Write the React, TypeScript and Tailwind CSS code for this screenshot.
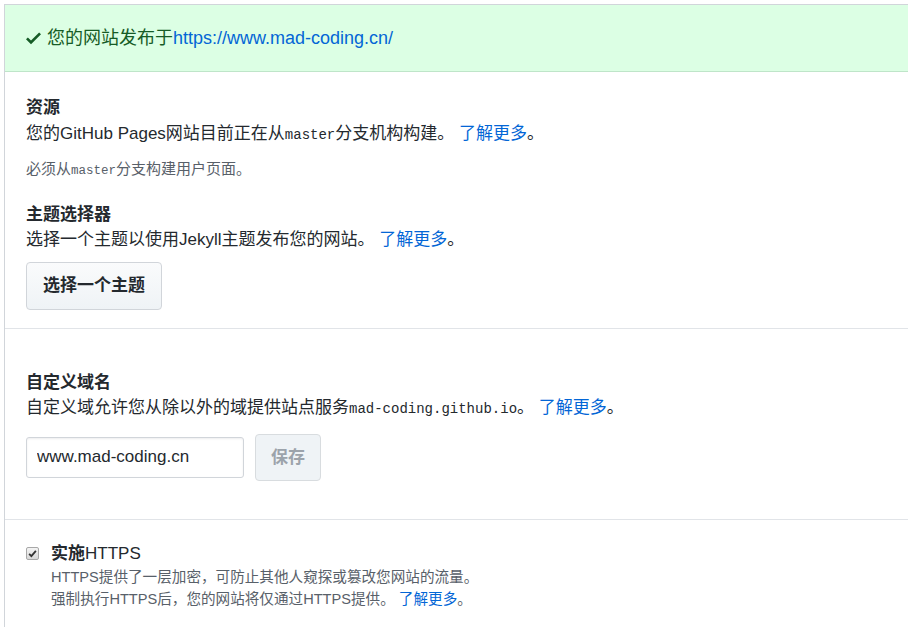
const sans = "font-['Liberation_Sans','Noto_Sans_CJK_SC',sans-serif]";
const mono = "font-['Liberation_Mono','DejaVu_Sans_Mono',monospace]";

function LearnMore() {
  return (
    <>
      {' '}
      <a href="#" className="text-[#0366d6]">
        了解更多
      </a>
      。
    </>
  );
}

function CheckIcon() {
  return (
    <svg width="15" height="20" viewBox="0 0 12 16" className="shrink-0 fill-[#165c26]">
      <path fillRule="evenodd" d="M12 5l-8 8-4-4 1.5-1.5L4 10l6.5-6.5L12 5z" />
    </svg>
  );
}

export default function App() {
  return (
    <div className={`${sans} min-h-[627px] bg-white pl-1 pt-1 text-[17px] leading-[1.5] text-[#24292e]`}>
      <div className="min-h-[623px] w-[1000px] border-l border-t border-[#d1d5da]">
        {/* flash */}
        <div className="flex h-[67px] items-center gap-[6px] border-b border-[#bfe5c9] bg-[#dcffe4] pl-[21px] text-[18px] text-[#165c26]">
          <CheckIcon />
          <span>
            您的网站发布于
            <a href="#" className="text-[#0366d6]">
              https://www.mad-coding.cn/
            </a>
          </span>
        </div>

        {/* source + theme */}
        <div className="border-b border-[#e1e4e8] pb-[18px] pl-[21px] pt-[23px]">
          <h3 className="font-bold">资源</h3>
          <p>
            您的GitHub Pages网站目前正在从<code className={`${mono} text-[14px]`}>master</code>分支机构构建。
            <LearnMore />
          </p>
          <p className="mt-[12px] text-[15px] text-[#586069]">
            必须从<code className={`${mono} text-[12.5px]`}>master</code>分支构建用户页面。
          </p>

          <h3 className="mt-[21px] font-bold">主题选择器</h3>
          <p>
            选择一个主题以使用Jekyll主题发布您的网站。
            <LearnMore />
          </p>
          <button className="mt-[9px] h-[48px] rounded-[4px] border border-[#d1d5da] bg-gradient-to-b from-[#fafbfc] to-[#eff3f6] px-4 font-bold">
            选择一个主题
          </button>
        </div>

        {/* custom domain */}
        <div className="border-b border-[#e1e4e8] pb-[38px] pl-[21px] pt-[41px]">
          <h3 className="font-bold">自定义域名</h3>
          <p>
            自定义域允许您从除以外的域提供站点服务<code className={`${mono} text-[14px]`}>mad-coding.github.io</code>。
            <LearnMore />
          </p>
          <div className="mt-[13px] flex items-center gap-[11px]">
            <input
              type="text"
              defaultValue="www.mad-coding.cn"
              className={`${sans} h-[41px] w-[218px] rounded-[3px] border border-[#d1d5da] bg-white px-[10px] text-[17px] text-[#24292e] shadow-[inset_0_1px_2px_rgba(27,31,35,0.075)] outline-none`}
            />
            <button
              disabled
              className="h-[47px] w-[66px] rounded-[4px] border border-[#d8dcdf] bg-[#eff3f6] font-bold text-[#9ca3ab]"
            >
              保存
            </button>
          </div>
        </div>

        {/* https */}
        <div className="flex gap-[12px] pl-[21px] pt-[21px]">
          <span className="mt-[6px] flex h-[13px] w-[13px] shrink-0 items-center justify-center rounded-[2px] border border-[#a8a8a8] bg-gradient-to-b from-[#f4f4f4] to-[#d8d8d8]">
            <svg width="9" height="9" viewBox="0 0 12 12">
              <path d="M1.5 6.5 L4.5 9.5 L10.5 2.5" fill="none" stroke="#333" strokeWidth="2.4" />
            </svg>
          </span>
          <div>
            <div className="font-bold">
              实施<span className="font-normal">HTTPS</span>
            </div>
            <p className="text-[14.6px] leading-[22px] text-[#586069]">HTTPS提供了一层加密，可防止其他人窥探或篡改您网站的流量。</p>
            <p className="text-[14.6px] leading-[22px] text-[#586069]">
              强制执行HTTPS后，您的网站将仅通过HTTPS提供。
              <LearnMore />
            </p>
          </div>
        </div>
      </div>
    </div>
  );
}
